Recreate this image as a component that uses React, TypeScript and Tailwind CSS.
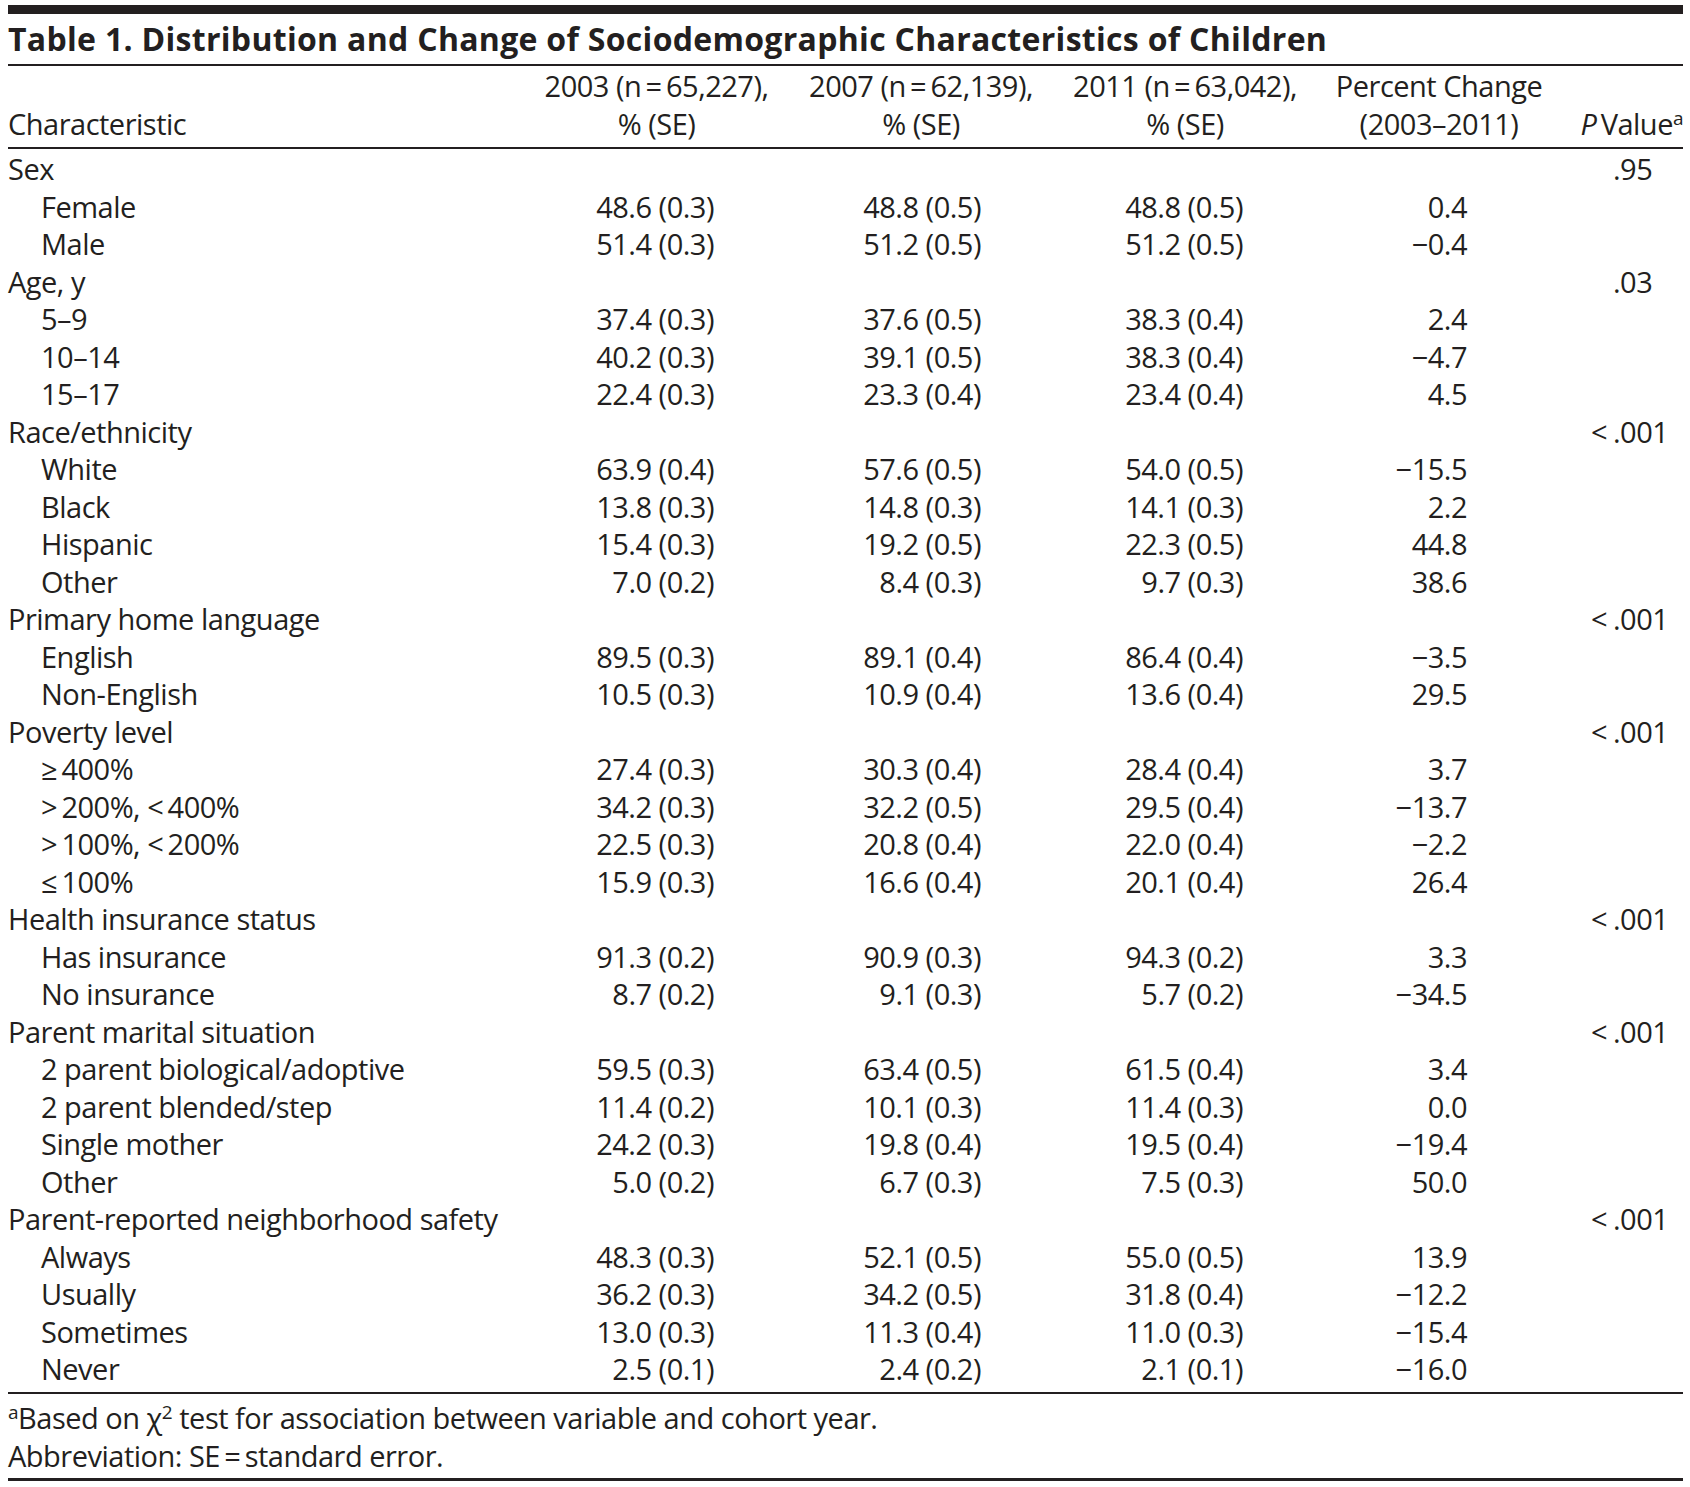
import React from "react"

type Row = { label: string; vals?: string[]; p?: string; sub?: boolean }

const groups: { label: string; p: string; rows: [string, string, string, string, string][] }[] = [
  {
    label: "Sex",
    p: ".95",
    rows: [
      ["Female", "48.6 (0.3)", "48.8 (0.5)", "48.8 (0.5)", "0.4"],
      ["Male", "51.4 (0.3)", "51.2 (0.5)", "51.2 (0.5)", "\u22120.4"],
    ],
  },
  {
    label: "Age, y",
    p: ".03",
    rows: [
      ["5\u20139", "37.4 (0.3)", "37.6 (0.5)", "38.3 (0.4)", "2.4"],
      ["10\u201314", "40.2 (0.3)", "39.1 (0.5)", "38.3 (0.4)", "\u22124.7"],
      ["15\u201317", "22.4 (0.3)", "23.3 (0.4)", "23.4 (0.4)", "4.5"],
    ],
  },
  {
    label: "Race/ethnicity",
    p: "<.001",
    rows: [
      ["White", "63.9 (0.4)", "57.6 (0.5)", "54.0 (0.5)", "\u221215.5"],
      ["Black", "13.8 (0.3)", "14.8 (0.3)", "14.1 (0.3)", "2.2"],
      ["Hispanic", "15.4 (0.3)", "19.2 (0.5)", "22.3 (0.5)", "44.8"],
      ["Other", "7.0 (0.2)", "8.4 (0.3)", "9.7 (0.3)", "38.6"],
    ],
  },
  {
    label: "Primary home language",
    p: "<.001",
    rows: [
      ["English", "89.5 (0.3)", "89.1 (0.4)", "86.4 (0.4)", "\u22123.5"],
      ["Non-English", "10.5 (0.3)", "10.9 (0.4)", "13.6 (0.4)", "29.5"],
    ],
  },
  {
    label: "Poverty level",
    p: "<.001",
    rows: [
      ["\u2265\u2009400%", "27.4 (0.3)", "30.3 (0.4)", "28.4 (0.4)", "3.7"],
      [">\u2009200%, <\u2009400%", "34.2 (0.3)", "32.2 (0.5)", "29.5 (0.4)", "\u221213.7"],
      [">\u2009100%, <\u2009200%", "22.5 (0.3)", "20.8 (0.4)", "22.0 (0.4)", "\u22122.2"],
      ["\u2264\u2009100%", "15.9 (0.3)", "16.6 (0.4)", "20.1 (0.4)", "26.4"],
    ],
  },
  {
    label: "Health insurance status",
    p: "<.001",
    rows: [
      ["Has insurance", "91.3 (0.2)", "90.9 (0.3)", "94.3 (0.2)", "3.3"],
      ["No insurance", "8.7 (0.2)", "9.1 (0.3)", "5.7 (0.2)", "\u221234.5"],
    ],
  },
  {
    label: "Parent marital situation",
    p: "<.001",
    rows: [
      ["2 parent biological/adoptive", "59.5 (0.3)", "63.4 (0.5)", "61.5 (0.4)", "3.4"],
      ["2 parent blended/step", "11.4 (0.2)", "10.1 (0.3)", "11.4 (0.3)", "0.0"],
      ["Single mother", "24.2 (0.3)", "19.8 (0.4)", "19.5 (0.4)", "\u221219.4"],
      ["Other", "5.0 (0.2)", "6.7 (0.3)", "7.5 (0.3)", "50.0"],
    ],
  },
  {
    label: "Parent-reported neighborhood safety",
    p: "<.001",
    rows: [
      ["Always", "48.3 (0.3)", "52.1 (0.5)", "55.0 (0.5)", "13.9"],
      ["Usually", "36.2 (0.3)", "34.2 (0.5)", "31.8 (0.4)", "\u221212.2"],
      ["Sometimes", "13.0 (0.3)", "11.3 (0.4)", "11.0 (0.3)", "\u221215.4"],
      ["Never", "2.5 (0.1)", "2.4 (0.2)", "2.1 (0.1)", "\u221216.0"],
    ],
  },
]

const cols = "grid grid-cols-[534px_229px_264px_264px_244px_140px]"

function Sup({ children }: { children: React.ReactNode }) {
  return <span className="inline-block align-top text-[19px] leading-[19px] mt-[4px]">{children}</span>
}

function PValue({ p }: { p?: string }) {
  if (!p) return <div />
  const lt = p.startsWith("<")
  return (
    <div className="flex">
      <span className="w-[70px] text-right pr-[6px]">{lt ? "<" : ""}</span>
      <span>{lt ? p.slice(1) : p}</span>
    </div>
  )
}

function TableRow({ row }: { row: Row }) {
  const v = row.vals
  return (
    <div className={`${cols} h-[37.5px] items-center whitespace-nowrap`}>
      <div className={row.sub ? "pl-[33px]" : ""}>{row.label}</div>
      <div className="text-right pr-[57px]">{v?.[0]}</div>
      <div className="text-right pr-[54px]">{v?.[1]}</div>
      <div className="text-right pr-[56px]">{v?.[2]}</div>
      <div className="text-right pr-[76px]">{v?.[3]}</div>
      <PValue p={row.p} />
    </div>
  )
}

export default function App() {
  const rows: Row[] = []
  groups.forEach((g) => {
    rows.push({ label: g.label, p: g.p })
    g.rows.forEach((r) => rows.push({ label: r[0], vals: r.slice(1), sub: true }))
  })

  return (
    <div className="min-h-screen bg-white pt-[5px] pl-[8px] text-[#231f20] font-['Open_Sans',sans-serif]">
      <div className="w-[1675px]">
        <div className="h-[9px] bg-[#231f20]" />
        <div className="h-[50px] flex items-center text-[32px] font-bold tracking-[0.3px] whitespace-nowrap">
          Table 1. Distribution and Change of Sociodemographic Characteristics of Children
        </div>
        <div className="h-[2px] bg-[#231f20]" />

        <div className="text-[29px] tracking-[-0.5px] leading-[37.5px]">
          <div className={`${cols} pt-[1px] pb-[5px] items-end whitespace-nowrap`}>
            <div>Characteristic</div>
            <div className="text-center">
              <div>2003 (n{"\u2009=\u2009"}65,227),</div>
              <div>% (SE)</div>
            </div>
            <div className="text-center pl-[36px]">
              <div>2007 (n{"\u2009=\u2009"}62,139),</div>
              <div>% (SE)</div>
            </div>
            <div className="text-center pl-[36px]">
              <div>2011 (n{"\u2009=\u2009"}63,042),</div>
              <div>% (SE)</div>
            </div>
            <div className="text-center pl-[36px]">
              <div>Percent Change</div>
              <div>(2003{"\u2013"}2011)</div>
            </div>
            <div className="text-right">
              <i>P</i>
              {"\u2009"}Value<Sup>a</Sup>
            </div>
          </div>
          <div className="h-[2px] bg-[#231f20]" />

          <div className="pt-[1px] pb-[4.5px]">
            {rows.map((r, i) => (
              <TableRow key={i} row={r} />
            ))}
          </div>
          <div className="h-[2px] bg-[#231f20]" />

          <div className="pt-[5px] pb-[4px]">
            <div>
              <Sup>a</Sup>Based on {"\u03c7"}
              <Sup>2</Sup> test for association between variable and cohort year.
            </div>
            <div>Abbreviation: SE{"\u2009=\u2009"}standard error.</div>
          </div>
          <div className="h-[3px] bg-[#231f20]" />
        </div>
      </div>
    </div>
  )
}
